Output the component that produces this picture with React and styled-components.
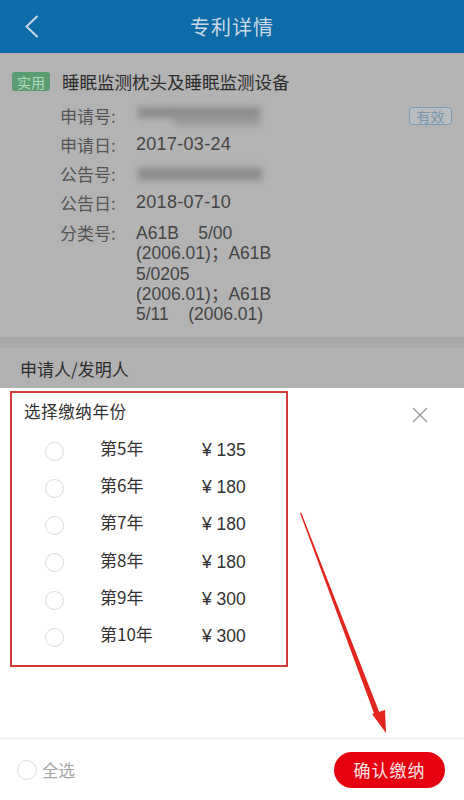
import React from "react";
import styled, { createGlobalStyle } from "styled-components";

const GlobalStyle = createGlobalStyle`
  html, body {
    margin: 0;
    padding: 0;
    background: #ffffff;
  }
  * {
    box-sizing: border-box;
  }
`;

const FONT = `"Noto Sans CJK SC", "Noto Sans", sans-serif`;
const NUM_FONT = `"Liberation Sans", "Noto Sans CJK SC", sans-serif`;

const St = {
  Page: styled.div`
    position: relative;
    width: 464px;
    height: 800px;
    overflow: hidden;
    display: flex;
    flex-direction: column;
    font-family: ${FONT};
    background: #b3b3b3;
  `,
  Header: styled.header`
    position: relative;
    flex: none;
    height: 53px;
    display: flex;
    align-items: center;
    justify-content: center;
    background: #0d6ba7;
  `,
  BackBtn: styled.div`
    position: absolute;
    left: 24px;
    top: 15px;
    width: 16px;
    height: 23px;
  `,
  HeaderTitle: styled.h1`
    margin: 0;
    font-size: 20px;
    font-weight: 400;
    color: #cbd9e6;
    letter-spacing: 1px;
  `,
  Detail: styled.section`
    flex: none;
    height: 284px;
    padding: 19px 12px 0 12px;
    background: #b3b3b3;
  `,
  TitleRow: styled.div`
    display: flex;
    align-items: center;
    height: 19px;
  `,
  Tag: styled.span`
    display: inline-flex;
    align-items: center;
    height: 19px;
    padding: 0 5px;
    border-radius: 3px;
    background: #5a9d73;
    color: #b4d9bf;
    font-size: 14px;
    line-height: 1;
  `,
  PatentName: styled.span`
    margin-left: 12px;
    font-size: 17.5px;
    color: #2c2c2c;
  `,
  InfoList: styled.div`
    margin-top: 10px;
    padding-left: 48px;
    display: flex;
    flex-direction: column;
  `,
  InfoRow: styled.div`
    display: flex;
    align-items: ${({ multi }) => (multi ? "flex-start" : "center")};
    height: ${({ multi }) => (multi ? "auto" : "29px")};
    margin-top: ${({ multi }) => (multi ? "6px" : "0")};
    font-size: 17px;
  `,
  Label: styled.span`
    flex: none;
    width: 76px;
    color: #555555;
    line-height: ${({ multi }) => (multi ? "20.3px" : "29px")};
  `,
  Value: styled.span`
    font-family: ${NUM_FONT};
    font-size: 18px;
    color: #454545;
    letter-spacing: 0.3px;
  `,
  ClassLines: styled.div`
    display: flex;
    flex-direction: column;
    font-family: ${NUM_FONT};
    font-size: 17.5px;
    color: #454545;
    line-height: 20.3px;
    white-space: pre;
  `,
  Blur: styled.span`
    position: relative;
    display: inline-block;
    width: ${({ width }) => width}px;
    height: 22px;
    margin-left: -6px;
    filter: blur(3.5px);
  `,
  BlurBar: styled.span`
    position: absolute;
    left: ${({ left }) => left}px;
    top: ${({ top }) => top}px;
    width: ${({ width }) => width}px;
    height: ${({ height }) => height}px;
    background: ${({ shade }) => shade || "#8a8a8a"};
  `,
  StatusBadge: styled.span`
    margin-left: auto;
    display: inline-flex;
    align-items: center;
    justify-content: center;
    width: 43px;
    height: 18px;
    border: 1px solid #7d9cb3;
    border-radius: 3px;
    color: #7897ae;
    background: #b9bcbf;
    font-size: 14px;
    line-height: 1;
  `,
  Band: styled.div`
    flex: none;
    height: 11px;
    background: #a9a9a9;
  `,
  ApplicantRow: styled.div`
    flex: none;
    height: 40px;
    display: flex;
    align-items: center;
    padding-left: 20px;
    font-size: 17px;
    color: #2c2c2c;
    background: #b1b1b1;
  `,
  Sheet: styled.div`
    position: relative;
    flex: 1;
    display: flex;
    flex-direction: column;
    background: #ffffff;
  `,
  SheetBody: styled.div`
    flex: 1;
    display: flex;
    align-items: flex-start;
    padding: 3px 36px 0 10px;
  `,
  SelectBox: styled.div`
    width: 278px;
    height: 276px;
    border: 2px solid #d23b37;
    padding: 8px 0 0 12px;
  `,
  SheetTitle: styled.div`
    font-size: 16.5px;
    line-height: 20px;
    color: #333333;
    letter-spacing: 0.6px;
  `,
  YearList: styled.div`
    margin-top: 8px;
  `,
  YearRow: styled.div`
    height: 37.2px;
    line-height: 37.2px;
    font-size: 17px;
    color: #333333;
    white-space: nowrap;
  `,
  Radio: styled.span`
    display: inline-block;
    vertical-align: middle;
    width: ${({ size }) => size || 19}px;
    height: ${({ size }) => size || 19}px;
    margin-left: ${({ ml }) => ml || 0}px;
    border: 1px solid #dcdcdc;
    border-radius: 50%;
    background: #ffffff;
  `,
  YearLabel: styled.span`
    display: inline-block;
    vertical-align: 1px;
    width: 102px;
    margin-left: 36px;
  `,
  Price: styled.span`
    font-family: ${NUM_FONT};
    font-size: 17.5px;
    white-space: pre;
  `,
  CloseBtn: styled.div`
    margin-left: auto;
    margin-top: 13px;
    width: 16px;
    height: 16px;
  `,
  Footer: styled.footer`
    flex: none;
    height: 62px;
    display: flex;
    align-items: center;
    padding: 0 19px 0 17px;
    border-top: 1px solid #eeeeee;
  `,
  SelectAll: styled.span`
    margin-left: 5px;
    font-size: 16.5px;
    color: #a6a6a6;
  `,
  ConfirmBtn: styled.button`
    margin-left: auto;
    width: 111px;
    height: 36px;
    border: none;
    border-radius: 18px;
    background: #e6000f;
    color: #fbe3e3;
    font-family: ${FONT};
    font-size: 17px;
    letter-spacing: 1px;
    padding: 0;
  `,
  Arrow: styled.svg`
    position: absolute;
    left: 0;
    top: 0;
    width: 464px;
    height: 412px;
    pointer-events: none;
  `,
};

const years = [
  { year: "第5年", price: "¥ 135" },
  { year: "第6年", price: "¥ 180" },
  { year: "第7年", price: "¥ 180" },
  { year: "第8年", price: "¥ 180" },
  { year: "第9年", price: "¥ 300" },
  { year: "第10年", price: "¥ 300" },
];

const classLines = [
  "A61B    5/00",
  "(2006.01)；A61B",
  "5/0205",
  "(2006.01)；A61B",
  "5/11    (2006.01)",
];

const App = () => {
  return (
    <St.Page>
      <GlobalStyle />
      <St.Header>
        <St.BackBtn>
          <svg width="16" height="23" viewBox="0 0 16 23">
            <polyline
              points="13,1.5 2.5,11.5 13,21.5"
              fill="none"
              stroke="#c6d6e5"
              strokeWidth="2"
              strokeLinecap="round"
              strokeLinejoin="round"
            />
          </svg>
        </St.BackBtn>
        <St.HeaderTitle>专利详情</St.HeaderTitle>
      </St.Header>

      <St.Detail>
        <St.TitleRow>
          <St.Tag>实用</St.Tag>
          <St.PatentName>睡眠监测枕头及睡眠监测设备</St.PatentName>
        </St.TitleRow>
        <St.InfoList>
          <St.InfoRow>
            <St.Label>申请号:</St.Label>
            <St.Blur width={156}>
              <St.BlurBar left={8} top={2} width={122} height={11} />
              <St.BlurBar left={44} top={12} width={86} height={9} shade="#9b9b9b" />
            </St.Blur>
            <St.StatusBadge>有效</St.StatusBadge>
          </St.InfoRow>
          <St.InfoRow>
            <St.Label>申请日:</St.Label>
            <St.Value>2017-03-24</St.Value>
          </St.InfoRow>
          <St.InfoRow>
            <St.Label>公告号:</St.Label>
            <St.Blur width={144}>
              <St.BlurBar left={8} top={5} width={124} height={12} />
            </St.Blur>
          </St.InfoRow>
          <St.InfoRow>
            <St.Label>公告日:</St.Label>
            <St.Value>2018-07-10</St.Value>
          </St.InfoRow>
          <St.InfoRow multi>
            <St.Label multi>分类号:</St.Label>
            <St.ClassLines>
              {classLines.map((line, i) => (
                <span key={`class-${i}`}>{line}</span>
              ))}
            </St.ClassLines>
          </St.InfoRow>
        </St.InfoList>
      </St.Detail>

      <St.Band />
      <St.ApplicantRow>申请人/发明人</St.ApplicantRow>

      <St.Sheet>
        <St.SheetBody>
          <St.SelectBox>
            <St.SheetTitle>选择缴纳年份</St.SheetTitle>
            <St.YearList>
              {years.map((item) => (
                <St.YearRow key={`year-${item.year}`}>
                  <St.Radio ml={21} />
                  <St.YearLabel>{item.year}</St.YearLabel>
                  <St.Price>{item.price}</St.Price>
                </St.YearRow>
              ))}
            </St.YearList>
          </St.SelectBox>
          <St.CloseBtn>
            <svg width="16" height="16" viewBox="0 0 16 16">
              <path
                d="M1.5 1.5 L14.5 14.5 M14.5 1.5 L1.5 14.5"
                stroke="#9a9a9a"
                strokeWidth="1.4"
                strokeLinecap="round"
              />
            </svg>
          </St.CloseBtn>
        </St.SheetBody>
        <St.Footer>
          <St.Radio size={20} />
          <St.SelectAll>全选</St.SelectAll>
          <St.ConfirmBtn>确认缴纳</St.ConfirmBtn>
        </St.Footer>

        <St.Arrow viewBox="0 0 464 412">
          <polygon points="300,125 301.2,124.6 380,326 375,328" fill="#e2261e" />
          <polygon points="372,326 385,322 386,345" fill="#e2261e" />
        </St.Arrow>
      </St.Sheet>
    </St.Page>
  );
};

export default App;
